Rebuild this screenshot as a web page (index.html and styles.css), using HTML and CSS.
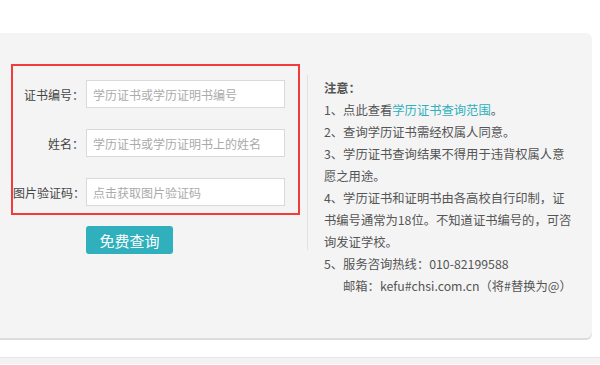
FILE: index.html
```html
<!DOCTYPE html>
<html lang="zh-CN">
<head>
    <meta charset="UTF-8">
    <meta name="viewport" content="width=device-width, initial-scale=1.0">
    <title>学历证书查询</title>
    <link rel="stylesheet" href="styles.css">
</head>
<body>
    <div class="page-top"></div>
    <div class="panel">
        <div class="query">
            <form class="highlight">
                <div class="row">
                    <label for="zsbh">证书编号：</label>
                    <input type="text" id="zsbh" placeholder="学历证书或学历证明书编号">
                </div>
                <div class="row">
                    <label for="xm">姓名：</label>
                    <input type="text" id="xm" placeholder="学历证书或学历证明书上的姓名">
                </div>
                <div class="row">
                    <label for="yzm">图片验证码：</label>
                    <input type="text" id="yzm" placeholder="点击获取图片验证码">
                </div>
            </form>
            <button type="button" class="submit-btn">免费查询</button>
        </div>
        <div class="divider"></div>
        <div class="notes">
            <p class="notes-title">注意：</p>
            <p>1、点此查看<a href="#">学历证书查询范围</a>。</p>
            <p>2、查询学历证书需经权属人同意。</p>
            <p>3、学历证书查询结果不得用于违背权属人意愿之用途。</p>
            <p>4、学历证书和证明书由各高校自行印制，证书编号通常为18位。不知道证书编号的，可咨询发证学校。</p>
            <p>5、服务咨询热线：010-82199588</p>
            <p class="indent">邮箱：kefu#chsi.com.cn（将#替换为@）</p>
        </div>
    </div>
    <div class="page-bottom"></div>
</body>
</html>
```

FILE: styles.css
```css
/* 学历证书查询 */
body {
    margin: 0;
    background: #fff;
    font-family: "Noto Sans CJK SC", "Noto Sans", sans-serif;
    overflow: hidden;
}
.page-top {
    height: 33px;
}
.panel {
    display: flex;
    align-items: flex-start;
    margin-left: -8px;
    width: 600px;
    height: 305px;
    padding: 31px 0 0 19px;
    box-sizing: border-box;
    background: #f4f4f4;
    border-radius: 6px;
    box-shadow: 0 2px 0 #dcdcdc;
}
.query {
    width: 289px;
}
.highlight {
    margin: 0;
    border: 2px solid #f23c3c;
    padding: 14px 13px 7px 0;
}
.row {
    display: flex;
    align-items: center;
    margin-bottom: 21px;
}
.row:last-child {
    margin-bottom: 0;
}
.row label {
    width: 71px;
    margin-right: 2px;
    text-align: right;
    font-size: 12px;
    color: #444;
    white-space: nowrap;
}
.row input {
    width: 199px;
    height: 28px;
    box-sizing: border-box;
    border: 1px solid #d9d9d9;
    padding: 0 6px;
    font-family: inherit;
    font-size: 12px;
    color: #333;
    background: #fff;
    outline: none;
}
.row input::placeholder {
    color: #aaa;
}
.submit-btn {
    display: block;
    margin: 11px 0 0 75px;
    width: 87px;
    height: 28px;
    padding: 0;
    border: none;
    border-radius: 3px;
    background-color: #2fb0bc;
    color: #fff;
    font-family: inherit;
    font-size: 15px;
    cursor: pointer;
}
.divider {
    width: 1px;
    height: 175px;
    margin: 11px 0 0 7px;
    background: #e2e2e2;
}
.notes {
    width: 250px;
    margin: 13px 0 0 16px;
    font-size: 12.3px;
    line-height: 22px;
    color: #555;
}
.notes p {
    margin: 0;
}
.notes-title {
    font-weight: bold;
}
.notes a {
    color: #2fb0bc;
    text-decoration: none;
}
.notes .indent {
    padding-left: 19px;
}
.page-bottom {
    margin-top: 19px;
    height: 6px;
    border-top: 1px solid #e6e6e6;
    background: #f2f2f2;
}
```
